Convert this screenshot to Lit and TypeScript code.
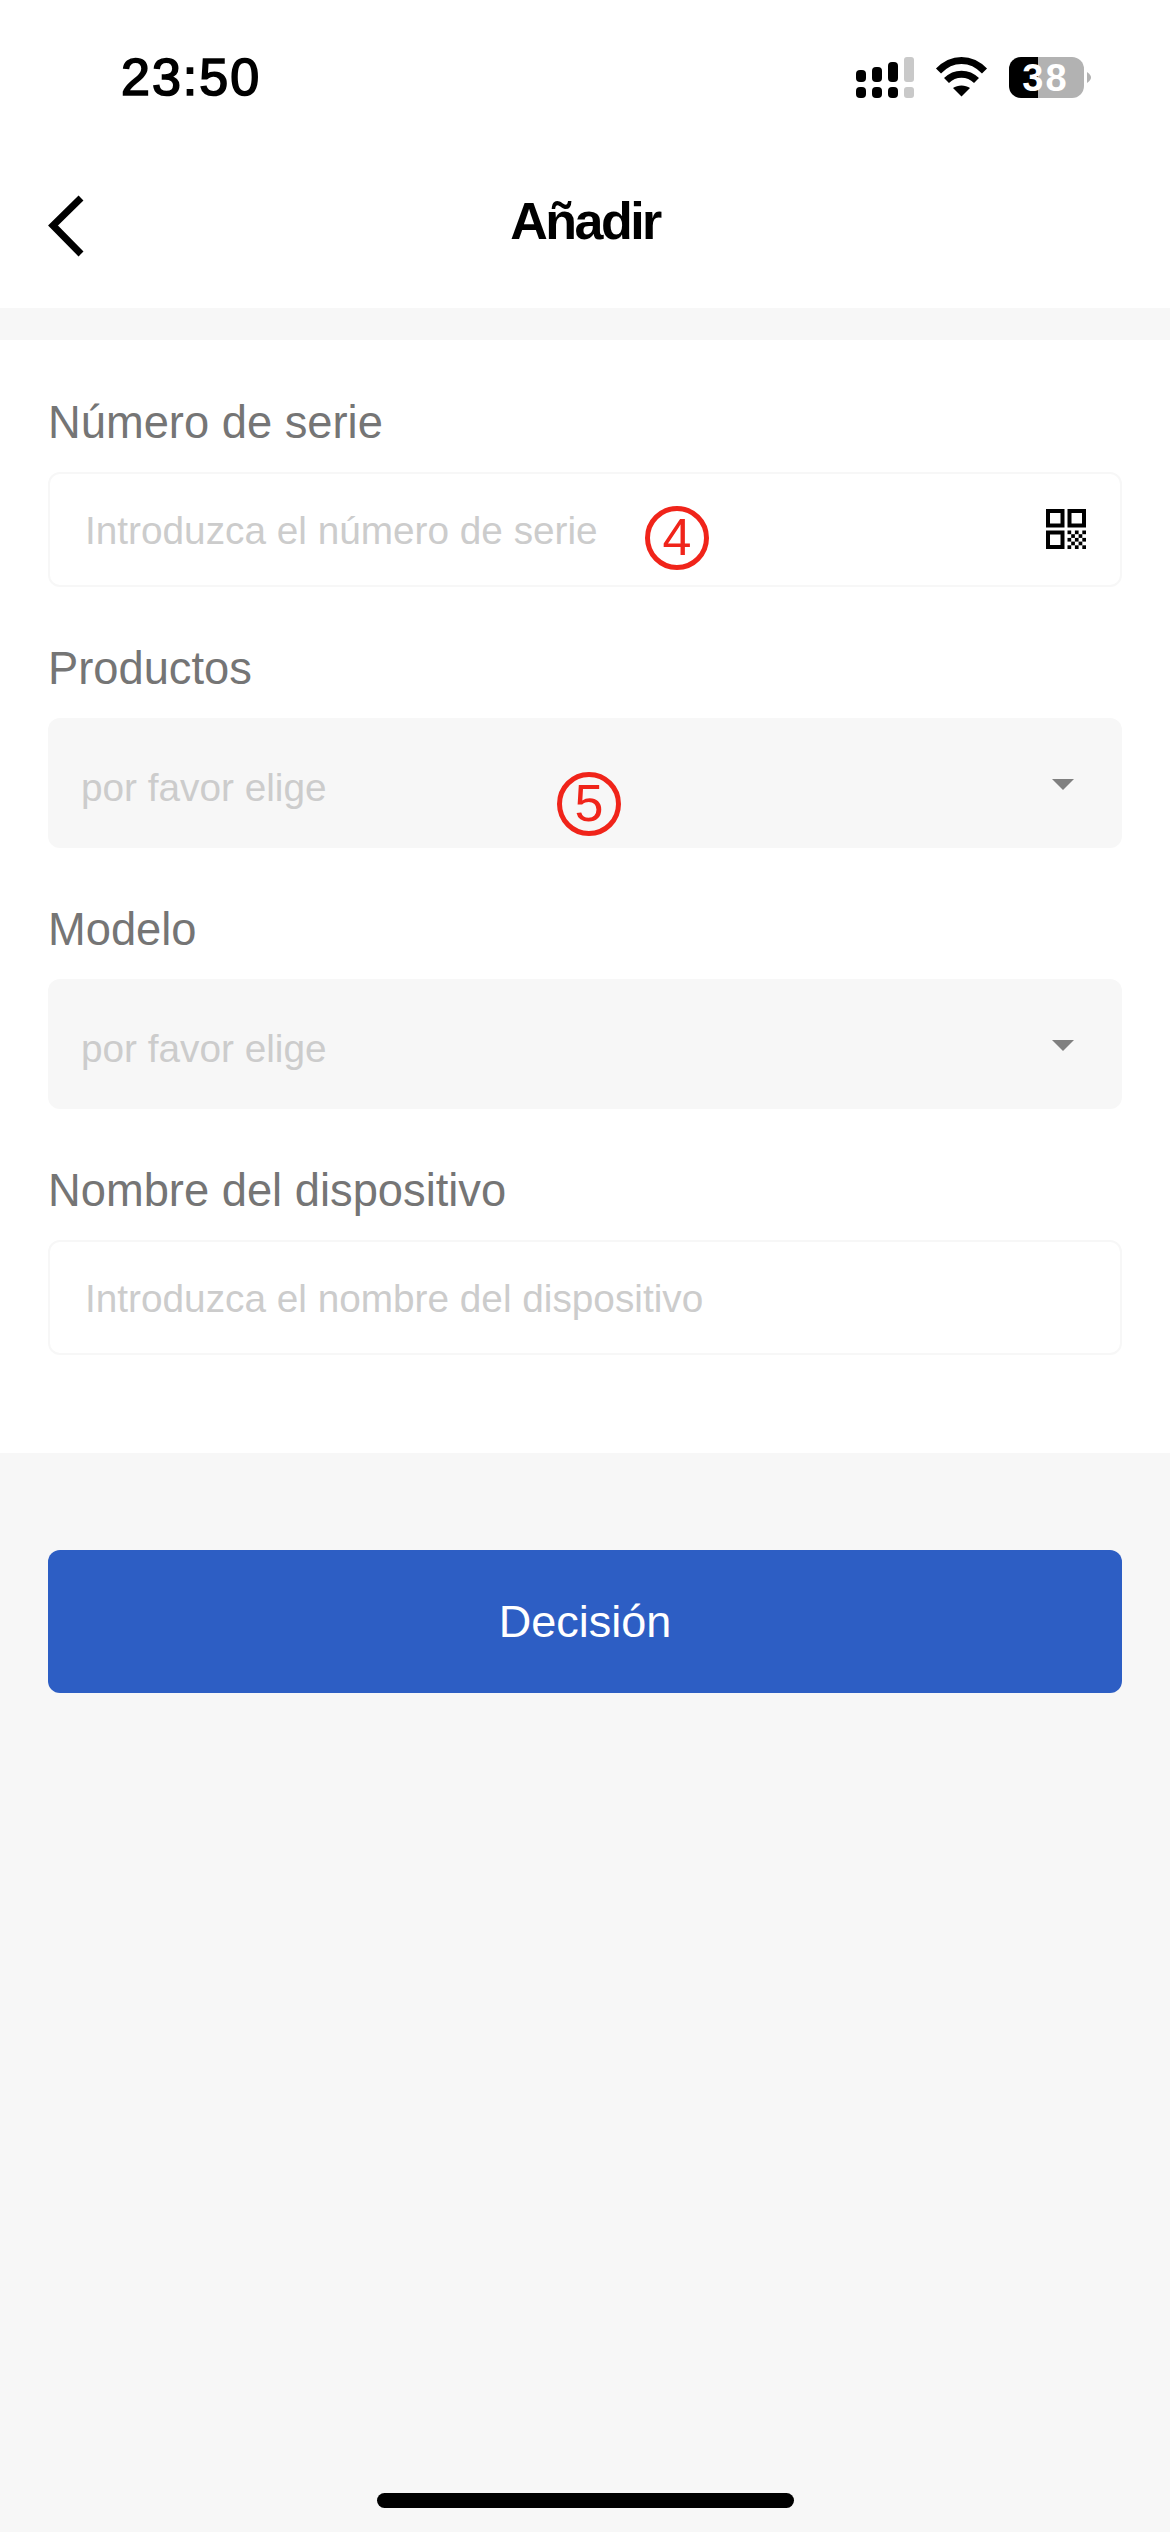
import { LitElement, html, css, svg } from "lit";
import { customElement } from "lit/decorators.js";

const F = css`"Liberation Sans", Arial, sans-serif`;

@customElement("app-root")
export class AppRoot extends LitElement {
  static styles = css`
    :host { display: block; width: 1170px; height: 2532px; background: #f7f7f7; font-family: ${F}; overflow: hidden; position: relative; }
    .head { background: #fff; height: 308px; display: flex; flex-direction: column; }
    .status { height: 136px; display: flex; align-items: flex-start; justify-content: space-between; box-sizing: border-box; padding: 0 78px 0 121px; }
    .time { font-size: 52px; font-weight: 400; line-height: 52px; margin-top: 51px; color: #000; letter-spacing: 2px; -webkit-text-stroke: 1.7px #000; }
    .sb { display: block; margin-top: 57px; }
    .nav { height: 172px; box-sizing: border-box; position: relative; display: flex; justify-content: center; padding-top: 58px; }
    .back { position: absolute; left: 45px; top: 57px; }
    .title { font-size: 52px; font-weight: 700; line-height: 54px; color: #000; letter-spacing: -2.5px; }
    .form { margin-top: 32px; background: #fff; height: 1113px; box-sizing: border-box; padding: 58px 48px 0; display: flex; flex-direction: column; position: relative; }
    .label { font-size: 45.3px; line-height: 50px; color: #757575; }
    .field { margin-top: 24px; display: flex; align-items: center; justify-content: space-between; box-sizing: border-box; width: 1074px; border-radius: 12px; }
    .input { height: 115px; border: 2px solid #f7f7f7; padding: 0 34px 0 35px; }
    .select { height: 130px; background: #f7f7f7; padding: 0 48px 0 33px; }
    .ph { font-size: 38.75px; line-height: 44px; color: #ccc; }
    .select .ph { margin-top: 9px; }
    .input .ph { margin-top: 3px; }
    .gap { margin-top: 57px; }
    .tri { display: block; margin-top: 3px; }
    .qr { display: block; margin-top: -1px; }
    .mark { position: absolute; width: 64px; height: 64px; box-sizing: border-box; border: 5px solid #f0241a; border-radius: 50%; color: #f0241a; font-size: 52px; line-height: 52px; text-align: center; }
    .m4 { left: 645px; top: 506px; }
    .m5 { left: 557px; top: 772px; }
    .actions { padding: 97px 48px 0; }
    .btn { height: 143px; width: 1074px; border-radius: 12px; background: #2d5ec4; color: #fff; font-size: 45px; display: flex; align-items: center; justify-content: center; }
    .home { position: absolute; left: 377px; top: 2493px; width: 417px; height: 15px; border-radius: 8px; background: #000; }
  `;

  private field(kind: string, text: string, icon: unknown) {
    return html`<div class="field ${kind}"><span class="ph">${text}</span>${icon}</div>`;
  }

  render() {
    const tri = html`<svg class="tri" width="22" height="11" viewBox="0 0 22 11"><path d="M0 0H22L11 11Z" fill="#808080"/></svg>`;
    const cells: [number, number][] = [[0,0],[2,0],[4,0],[1,1],[3,1],[0,2],[2,2],[4,2],[1,3],[3,3],[0,4],[2,4],[4,4]];
    const qr = html`<svg class="qr" width="40" height="40" viewBox="0 0 40 40">
      <g fill="none" stroke="#000" stroke-width="4">
        <rect x="2" y="2" width="14.5" height="14.5"/><rect x="23.5" y="2" width="14.5" height="14.5"/><rect x="2" y="23.5" width="14.5" height="14.5"/>
      </g>
      ${cells.map(([x, y]) => svg`<rect x=${21.5 + x * 3.7} y=${21.5 + y * 3.7} width="3.7" height="3.7" fill="#000"/>`)}
    </svg>`;
    return html`
      <div class="head">
        <div class="status">
          <span class="time">23:50</span>
          <svg class="sb" width="236" height="42" viewBox="856 57 236 42">
            <g fill="#000">
              <rect x="856" y="70" width="10" height="12" rx="4"/><rect x="872" y="67" width="10" height="15" rx="4"/><rect x="888" y="62" width="10" height="20" rx="4"/>
              <rect x="856" y="87" width="10" height="11" rx="4"/><rect x="872" y="87" width="10" height="11" rx="4"/><rect x="888" y="87" width="10" height="11" rx="4"/>
            </g>
            <g fill="#c9c9c9"><rect x="904" y="57" width="10" height="25" rx="3"/><rect x="904" y="87" width="10" height="11" rx="3"/></g>
            <g fill="none" stroke="#000" stroke-width="7">
              <path d="M938.5 71C952 57 971 57 984.5 71"/>
              <path d="M946.5 80.5C955 72 968 72 976.5 80.5"/>
            </g>
            <path d="M953 88C957.5 84.5 965.5 84.5 970 88L961.5 96.5Z" fill="#000"/>
            <path d="M1038 57H1021A12 12 0 0 0 1009 69V86A12 12 0 0 0 1021 98H1038Z" fill="#000"/>
            <path d="M1038 57H1072A12 12 0 0 1 1084 69V86A12 12 0 0 1 1072 98H1038Z" fill="#b2b2b2"/>
            <path d="M1087 72C1090 74 1091 76 1091 77.5C1091 79 1090 81 1087 83Z" fill="#b2b2b2"/>
            <text x="1045.5" y="91" text-anchor="middle" letter-spacing="2" font-family="Liberation Sans, Arial, sans-serif" font-weight="700" font-size="38" fill="#fff">38</text>
          </svg>
        </div>
        <div class="nav">
          <svg class="back" width="42" height="64" viewBox="0 0 42 64"><path d="M36 5L8 32.5L36 61" fill="none" stroke="#000" stroke-width="7"/></svg>
          <span class="title">Añadir</span>
        </div>
      </div>
      <div class="form">
        <span class="label">Número de serie</span>
        ${this.field("input", "Introduzca el número de serie", qr)}
        <span class="label gap">Productos</span>
        ${this.field("select", "por favor elige", tri)}
        <span class="label gap">Modelo</span>
        ${this.field("select", "por favor elige", tri)}
        <span class="label gap">Nombre del dispositivo</span>
        ${this.field("input", "Introduzca el nombre del dispositivo", "")}
      </div>
      <div class="actions"><div class="btn">Decisión</div></div>
      <span class="mark m4">4</span>
      <span class="mark m5">5</span>
      <div class="home"></div>
    `;
  }
}
